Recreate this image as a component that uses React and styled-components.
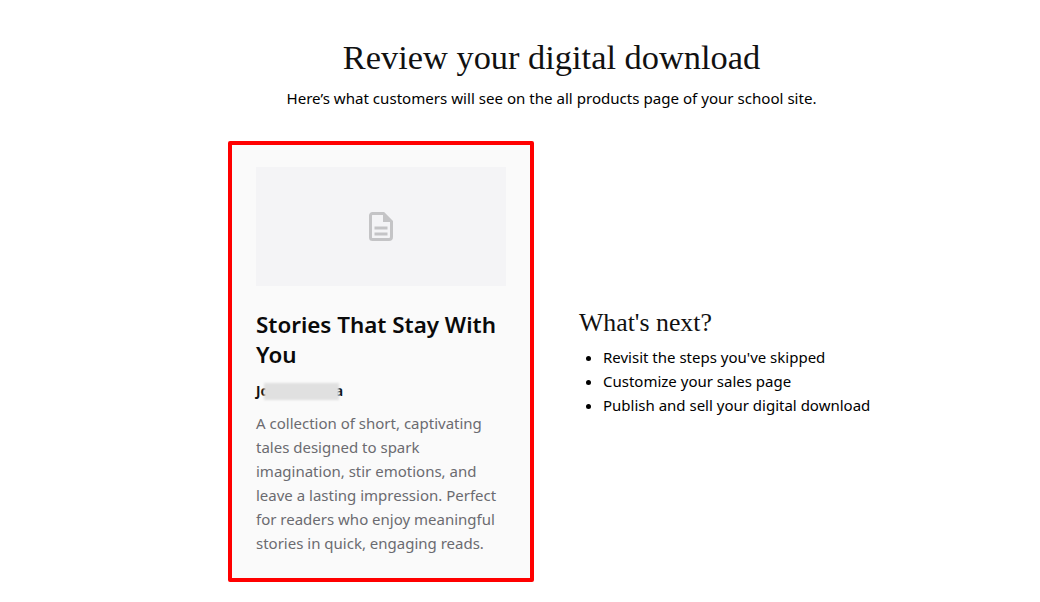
import styled, { createGlobalStyle } from "styled-components";

const GlobalStyle = createGlobalStyle`
  html, body {
    margin: 0;
    padding: 0;
    background: #fff;
  }
  body {
    font-family: "Noto Sans", "Open Sans", sans-serif;
    color: #000;
  }
`;

const Page = styled.div`
  width: 1040px;
  height: 602px;
  overflow: hidden;
  padding-top: 36px;
  box-sizing: border-box;
`;

const Header = styled.header`
  width: 1103px;
  text-align: center;
`;

const Title = styled.h1`
  margin: 0;
  font-family: "Liberation Serif", serif;
  font-size: 34.4px;
  font-weight: 400;
  line-height: 42px;
  color: #111;
`;

const Subtitle = styled.p`
  margin: 8px 0 0;
  font-size: 15.1px;
  line-height: 24px;
`;

const Content = styled.div`
  display: flex;
  align-items: center;
  gap: 45px;
  margin: 31px 0 0 228px;
`;

const Card = styled.article`
  width: 306px;
  height: 441px;
  box-sizing: border-box;
  border: 4px solid #ff0000;
  border-radius: 2px;
  background: #fafafa;
  padding: 22px 24px;
`;

const Thumb = styled.div`
  height: 119px;
  background: #f4f4f6;
  display: flex;
  align-items: center;
  justify-content: center;
`;

const CardTitle = styled.h2`
  margin: 24px 0 0;
  font-size: 22.4px;
  font-weight: 600;
  line-height: 30px;
  color: #0a0a0a;
`;

const Author = styled.div`
  position: relative;
  margin-top: 10px;
  font-size: 13.5px;
  font-weight: 700;
  line-height: 22px;
  color: #111;
`;

const AuthorEnd = styled.span`
  margin-left: 66px;
`;

const Redaction = styled.span`
  position: absolute;
  left: 8px;
  top: 3px;
  width: 75px;
  height: 17px;
  background: #e0e0e0;
  filter: blur(1px);
`;

const Description = styled.p`
  margin: 9px 0 0;
  font-size: 15px;
  line-height: 24px;
  color: #6b6b70;
`;

const Next = styled.section``;

const NextTitle = styled.h3`
  margin: 0;
  font-family: "Liberation Serif", serif;
  font-size: 25.8px;
  font-weight: 400;
  line-height: 32px;
  color: #111;
`;

const NextList = styled.ul`
  margin: 6px 0 0;
  padding: 0 0 0 24px;
  font-size: 15px;
  line-height: 24px;
`;

const DocIcon = () => (
  <svg width="24" height="29" viewBox="0 0 24 29" fill="none">
    <path
      d="M3.500 1.500h11L22.500 9.500V25a2.500 2.500 0 0 1-2.500 2.500H3.500A2 2 0 0 1 1.500 25.500V3.500A2 2 0 0 1 3.500 1.500Z"
      stroke="#c4c4c6"
      strokeWidth="3"
    />
    <path d="M14 2l8 8h-8Z" fill="#c4c4c6" />
    <path d="M5.500 14.500h13v3h-13zM5.500 20.500h13v3h-13z" fill="#c4c4c6" />
  </svg>
);

export default function App() {
  return (
    <>
      <GlobalStyle />
      <Page>
        <Header>
          <Title>Review your digital download</Title>
          <Subtitle>Here’s what customers will see on the all products page of your school site.</Subtitle>
        </Header>
        <Content>
          <Card>
            <Thumb>
              <DocIcon />
            </Thumb>
            <CardTitle>Stories That Stay With You</CardTitle>
            <Author>
              Jo
              <Redaction />
              <AuthorEnd>a</AuthorEnd>
            </Author>
            <Description>
              A collection of short, captivating tales designed to spark imagination, stir emotions, and leave a
              lasting impression. Perfect for readers who enjoy meaningful stories in quick, engaging reads.
            </Description>
          </Card>
          <Next>
            <NextTitle>What's next?</NextTitle>
            <NextList>
              <li>Revisit the steps you've skipped</li>
              <li>Customize your sales page</li>
              <li>Publish and sell your digital download</li>
            </NextList>
          </Next>
        </Content>
      </Page>
    </>
  );
}
